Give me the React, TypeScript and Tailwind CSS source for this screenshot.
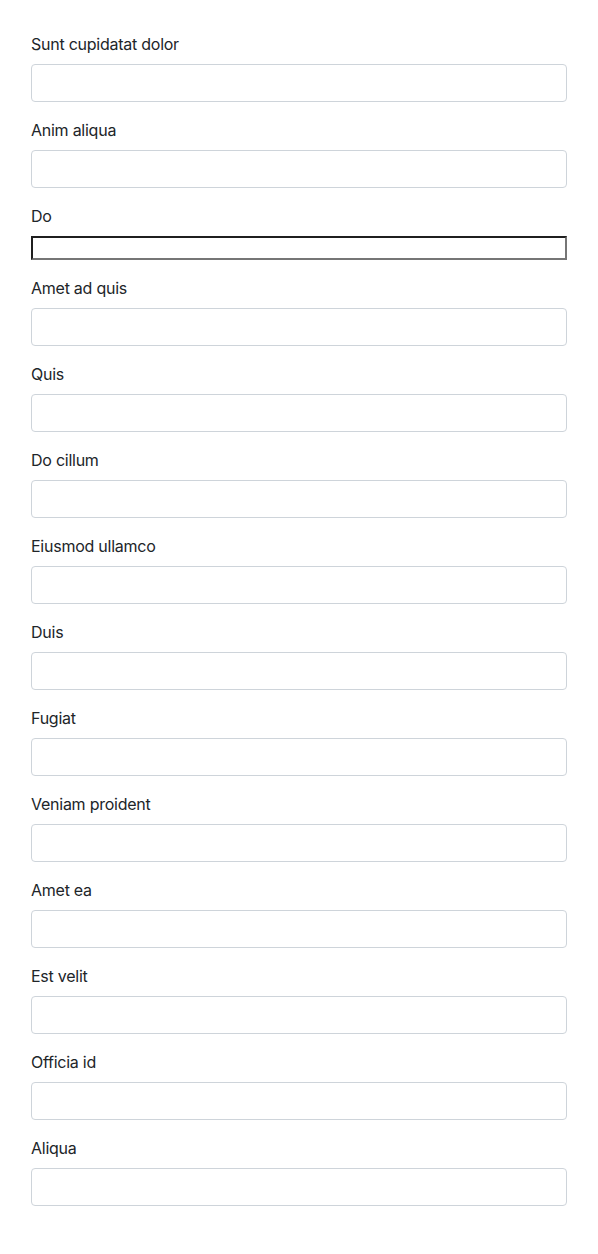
const fields: string[] = [
  'Sunt cupidatat dolor',
  'Anim aliqua',
  'Do',
  'Amet ad quis',
  'Quis',
  'Do cillum',
  'Eiusmod ullamco',
  'Duis',
  'Fugiat',
  'Veniam proident',
  'Amet ea',
  'Est velit',
  'Officia id',
  'Aliqua'
]

export default function App() {
  return (
    <div className="min-h-screen bg-white px-[31px] py-[32px] text-[16px] tracking-[-0.25px] text-[#212529] font-['Inter',sans-serif]">
      {fields.map((label, i) => (
        <div key={i} className="mb-4">
          <label className="mb-2 block leading-6">{label}</label>
          {label === 'Do' ? (
            <input
              type="text"
              className="block h-6 w-full border-2 border-t-[#1f1f1f] border-l-[#1f1f1f] border-b-[#767676] border-r-[#767676] bg-white"
            />
          ) : (
            <input
              type="text"
              className="block h-[38px] w-full rounded border border-[#ced4da] bg-white px-3"
            />
          )}
        </div>
      ))}
    </div>
  )
}
